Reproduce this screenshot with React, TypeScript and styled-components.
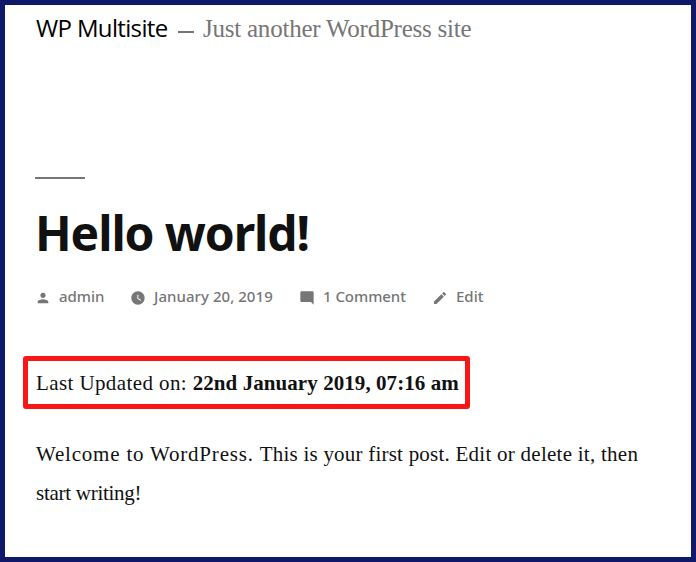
import React from 'react';
import styled, { createGlobalStyle } from 'styled-components';

const serif = '"Liberation Serif", "Times New Roman", serif';
const sans = '"Noto Sans", "Open Sans", sans-serif';

const GlobalStyle = createGlobalStyle`
  * { box-sizing: border-box; }
  body { margin: 0; background: #fff; }
`;

const Page = styled.div`
  width: 696px;
  height: 562px;
  border: 5px solid #10186a;
  background: #fff;
  color: #111;
  overflow: hidden;
`;

const SiteHeader = styled.header`
  display: flex;
  align-items: baseline;
  height: 172px;
  padding: 7px 0 0 31px;
  line-height: 32px;
  white-space: nowrap;
`;

const SiteTitle = styled.span`
  width: 142px;
  font: 400 24px/32px "Open Sans", sans-serif;
  letter-spacing: -0.65px;
  color: #000;
`;

const Dash = styled.span`
  width: 16px;
  height: 2px;
  margin-right: 9px;
  background: #767676;
  transform: translateY(-4px);
`;

const Tagline = styled.span`
  font: 400 25px/32px ${serif};
  letter-spacing: -0.23px;
  color: #767676;
`;

const Title = styled.h1`
  margin: 0 0 0 30px;
  height: 106px;
  font: 700 48px/60px "Noto Sans", sans-serif;
  letter-spacing: -1.1px;
  white-space: nowrap;

  &::before {
    content: '';
    display: block;
    width: 50px;
    height: 2px;
    margin-bottom: 24px;
    background: #767676;
  }
`;

const Meta = styled.div`
  display: flex;
  align-items: center;
  height: 26px;
  margin-left: 30px;
  color: #767676;
`;

const MetaItem = styled.span<{ $width: number; $spacing?: number }>`
  display: flex;
  align-items: center;
  flex: none;
  width: ${(p) => p.$width}px;
  font: 500 15px/26px ${sans};
  letter-spacing: ${(p) => p.$spacing ?? 0}px;
  white-space: nowrap;
`;

const Icon = styled.svg`
  flex: none;
  width: 16px;
  height: 16px;
  margin: 3px 8px 0 0;
  fill: currentColor;
`;

const UpdatedBox = styled.p`
  width: 447px;
  height: 53px;
  margin: 47px 0 0 18px;
  padding: 1px 0 0 8px;
  border: 5px solid #f91616;
  border-radius: 3px;
  font: 400 21px/43px ${serif};
  letter-spacing: 0.4px;
  white-space: nowrap;
`;

const Stamp = styled.strong`
  font-weight: 700;
  letter-spacing: 0.07px;
`;

const Body = styled.p`
  width: 640px;
  margin: 26px 0 0 31px;
  font: 400 21px/39px ${serif};
`;

const Sentence = styled.span<{ $spacing: number }>`
  letter-spacing: ${(p) => p.$spacing}px;
`;

export default function App() {
  return (
    <>
      <GlobalStyle />
      <Page>
        <SiteHeader>
          <SiteTitle>WP Multisite</SiteTitle>
          <Dash />
          <Tagline>Just another WordPress site</Tagline>
        </SiteHeader>
        <article>
          <Title>Hello world!</Title>
          <Meta>
            <MetaItem $width={95} $spacing={-0.05}>
              <Icon viewBox="0 0 24 24">
                <path d="M12 12c2.21 0 4-1.79 4-4s-1.79-4-4-4-4 1.79-4 4 1.79 4 4 4zm0 2c-2.67 0-8 1.34-8 4v2h16v-2c0-2.66-5.33-4-8-4z" />
              </Icon>
              admin
            </MetaItem>
            <MetaItem $width={169} $spacing={0.05}>
              <Icon viewBox="0 0 24 24">
                <path d="M12 2C6.5 2 2 6.5 2 12s4.500 10 10 10 10-4.500 10-10S17.500 2 12 2zm4.200 14.200L11 13V7h1.500v5.200l4.500 2.700-.8 1.300z" />
              </Icon>
              January 20, 2019
            </MetaItem>
            <MetaItem $width={133} $spacing={-0.05}>
              <Icon viewBox="0 0 24 24">
                <path d="M21.990 4c0-1.100-.89-2-1.990-2H4c-1.100 0-2 .9-2 2v12c0 1.100.9 2 2 2h14l4 4-.010-18z" />
              </Icon>
              1 Comment
            </MetaItem>
            <MetaItem $width={60}>
              <Icon viewBox="0 0 24 24">
                <path d="M3 17.250V21h3.750L17.810 9.940l-3.750-3.750L3 17.250zM20.710 7.040c.39-.39.39-1.020 0-1.410l-2.340-2.340c-.39-.39-1.020-.39-1.410 0l-1.830 1.830 3.750 3.750 1.830-1.830z" />
              </Icon>
              Edit
            </MetaItem>
          </Meta>
          <UpdatedBox>
            Last Updated on: <Stamp>22nd January 2019, 07:16 am</Stamp>
          </UpdatedBox>
          <Body>
            <Sentence $spacing={0.8}>Welcome to WordPress. </Sentence>
            <Sentence $spacing={0.22}>This is your first post. </Sentence>
            <Sentence $spacing={0.26}>Edit or delete it, then</Sentence>
            <br />
            <Sentence $spacing={-0.27}>start writing!</Sentence>
          </Body>
        </article>
      </Page>
    </>
  );
}
